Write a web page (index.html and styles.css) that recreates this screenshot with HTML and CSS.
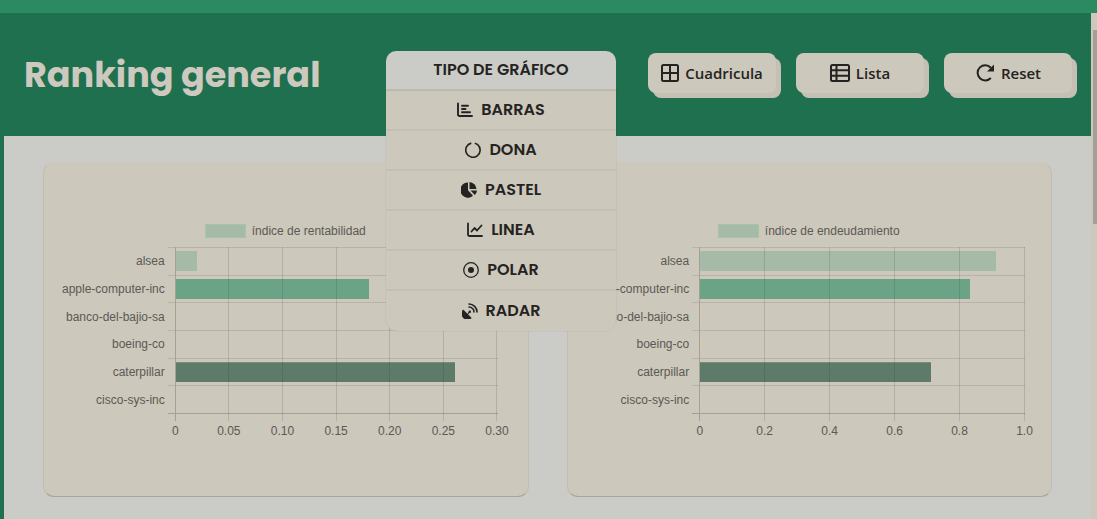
FILE: index.html
```html
<!DOCTYPE html>
<html lang="es">
<head>
<meta charset="utf-8">
<title>Ranking general</title>
<link rel="stylesheet" href="styles.css">
</head>
<body>
<div class="topbar"></div>
<div class="viewport">
  <div class="page">
    <header class="header">
      <h1 class="title">Ranking general</h1>
      <nav class="dropdown">
        <button class="dropdown-toggle" type="button" aria-expanded="true">TIPO DE GRÁFICO</button>
        <div class="menu">
          <button class="menu-item" type="button"><svg class="icon" viewBox="0 0 16 16"><path d="M1 1.500v11a1.500 1.500 0 0 0 1.500 1.500H15M5 3.800h6M5 7h3.500M5 10.200h8" stroke-width="1.900"/></svg>BARRAS</button>
          <button class="menu-item" type="button"><svg class="icon" viewBox="0 0 16 16"><path d="M9.800 1.200a7.200 7.200 0 0 1 2.900 1.500M12.700 2.700A7.200 7.200 0 1 1 6.300 1.100" stroke-width="1.600" stroke-linecap="butt"/></svg>DONA</button>
          <button class="menu-item" type="button"><svg class="icon solid" viewBox="0 0 16 16"><path d="M7 .5v7.800l5 5.400A7.600 7.600 0 1 1 7 .5z"/><path d="M8.500 0A7.500 7.500 0 0 1 15.500 7h-7z"/><path d="M9.500 8.500H16a7.500 7.500 0 0 1-2.200 4.600z"/></svg>PASTEL</button>
          <button class="menu-item" type="button"><svg class="icon" viewBox="0 0 16 16"><path d="M1 1.500v11a1.500 1.500 0 0 0 1.500 1.500H15M4.500 9.500l3-3.500 2.500 2.500 4.500-5" stroke-width="1.800"/></svg>LINEA</button>
          <button class="menu-item" type="button"><svg class="icon" viewBox="0 0 16 16"><circle cx="8" cy="8" r="7.300" stroke-width="1.300"/><circle class="dot" cx="8" cy="8" r="3"/></svg>POLAR</button>
          <button class="menu-item" type="button"><svg class="icon" viewBox="0 0 16 16"><path class="dot" d="M1.200 6.500l4.200 4.200 1.200-1.700a1.200 1.200 0 1 1 1 1L6 11.300l3.700 3.700A6 6 0 0 1 1.200 6.500z"/><path d="M7 1a8 8 0 0 1 8 8M7 4a5 5 0 0 1 5 5" stroke-width="1.600"/></svg>RADAR</button>
        </div>
      </nav>
      <div class="actions">
        <button class="action" type="button"><svg class="glyph" viewBox="0 0 18 18"><rect x="1" y="1" width="16" height="16" rx="1.500"/><path d="M9 1v16M1 9h16"/></svg>Cuadricula</button>
        <button class="action" type="button"><svg class="glyph wide" viewBox="0 0 20 18"><rect x="1" y="1" width="18" height="16" rx="1.500"/><path d="M6.500 1v16M1 6.300h18M1 11.700h18"/></svg>Lista</button>
        <button class="action" type="button"><svg class="glyph wide" viewBox="0 0 20 18"><path d="M15.800 14a7.600 7.600 0 1 1 0-10.300"/><path class="dot" d="M19 .5v7h-7z"/></svg>Reset</button>
      </div>
    </header>
    <main class="cards">
      <section class="card">
        <div class="legend"><span class="swatch"></span>índice de rentabilidad</div>
        <div class="chart">
          <div class="names"><span>alsea</span><span>apple-computer-inc</span><span>banco-del-bajio-sa</span><span>boeing-co</span><span>caterpillar</span><span>cisco-sys-inc</span></div>
          <div class="plot">
            <div class="rows">
              <div class="row"><i class="bar light" style="width:6.667%"></i></div>
              <div class="row"><i class="bar mid" style="width:60%"></i></div>
              <div class="row"></div><div class="row"></div>
              <div class="row"><i class="bar dark" style="width:86.667%"></i></div>
              <div class="row"></div>
            </div>
            <div class="lines"><i></i><i></i><i></i><i></i><i></i><i></i></div>
          </div>
          <div class="ticks"><span>0</span><span>0.05</span><span>0.10</span><span>0.15</span><span>0.20</span><span>0.25</span><span>0.30</span></div>
        </div>
      </section>
      <section class="card">
        <div class="legend"><span class="swatch"></span>índice de endeudamiento</div>
        <div class="chart short-ticks">
          <div class="names"><span>alsea</span><span>apple-computer-inc</span><span>banco-del-bajio-sa</span><span>boeing-co</span><span>caterpillar</span><span>cisco-sys-inc</span></div>
          <div class="plot">
            <div class="rows">
              <div class="row"><i class="bar light" style="width:91%"></i></div>
              <div class="row"><i class="bar mid" style="width:83%"></i></div>
              <div class="row"></div><div class="row"></div>
              <div class="row"><i class="bar dark" style="width:71%"></i></div>
              <div class="row"></div>
            </div>
            <div class="lines"><i></i><i></i><i></i><i></i><i></i></div>
          </div>
          <div class="ticks"><span>0</span><span>0.2</span><span>0.4</span><span>0.6</span><span>0.8</span><span>1.0</span></div>
        </div>
      </section>
    </main>
  </div>
  <div class="scrollbar"><div class="thumb"></div></div>
</div>
</body>
</html>
```
FILE: styles.css
```css
* { box-sizing: border-box; }
body {
  margin: 0;
  height: 100vh;
  display: flex;
  flex-direction: column;
  overflow: hidden;
  background: #cbccc7;
  font-family: "Liberation Sans", Arial, sans-serif;
}
.topbar { height: 13px; flex: none; background: #2b8a62; }
.viewport { flex: 1; display: flex; min-height: 0; }
.page { flex: 1; min-width: 0; border-left: 4px solid #1f704e; }
.header {
  display: grid;
  grid-template-columns: 1fr 230px auto;
  align-items: start;
  column-gap: 32px;
  padding: 38px 19px 0 20px;
  height: 123px;
  background: #1f704e;
}
.title {
  margin: 0;
  color: #cdc9bf;
  font: 700 35px/48px Poppins, Inter, sans-serif;
  white-space: nowrap;
}
button { border: 0; padding: 0; color: #242321; cursor: pointer; }
.dropdown { position: relative; }
.dropdown-toggle, .menu-item {
  display: flex;
  align-items: center;
  justify-content: center;
  gap: 8px;
  width: 100%;
  height: 40px;
  border-bottom: 2px solid #c5bfb4;
  font: 600 16px/24px Poppins, Inter, sans-serif;
}
.dropdown-toggle { background: #cbccc7; border-radius: 10px 10px 0 0; border-bottom-color: #c1bcb1; }
.menu {
  position: absolute;
  z-index: 2;
  top: 100%;
  left: 0;
  right: 0;
  border-radius: 0 0 12px 12px;
  background: #ccc8bc;
  box-shadow: 0 0 1px 1px rgba(0, 0, 0, .03);
}
.menu-item { background: none; }
.menu-item:last-child { border-bottom: 0; }
.icon { width: 16px; height: 16px; flex: none; fill: none; stroke: #242321; stroke-linecap: round; stroke-linejoin: round; }
.solid, .dot { fill: #242321; stroke: none; }
.actions { display: flex; gap: 20px; margin-top: 2px; }
.action {
  display: flex;
  align-items: center;
  justify-content: center;
  gap: 6px;
  width: 128px;
  height: 40px;
  border-radius: 8px;
  background: #cdc8bc;
  box-shadow: 5px 5px 0 #c6bfb4;
  font: 600 15px/20px "Open Sans", "Noto Sans", sans-serif;
}
.glyph { width: 18px; height: 18px; fill: none; stroke: #242321; stroke-width: 2; }
.glyph.wide { width: 20px; }
.glyph .dot { fill: #242321; stroke: none; }
.cards {
  display: grid;
  grid-template-columns: 1fr 1fr;
  gap: 38px;
  padding: 26px 39px;
}
.card {
  height: 335px;
  padding: 60px 19px 0 18px;
  border: 1px solid #c3bdb0;
  border-top-color: #ccc8bc;
  border-bottom-color: #aaa598;
  border-radius: 11px;
  background: #ccc8bc;
  color: #5b5953;
  font-size: 12px;
  line-height: 16px;
}
.legend { display: flex; justify-content: center; align-items: center; gap: 6px; }
.swatch { width: 41px; height: 14px; background: #a5bba7; border: 1px solid #a9c2ac; }
.chart {
  display: grid;
  grid-template-columns: auto 1fr;
  grid-template-rows: 167px auto;
  column-gap: 10px;
  padding-right: 11px;
  margin-top: 8px;
}
.short-ticks { padding: 0 7px 0 1px; }
.names { display: flex; flex-direction: column; text-align: right; }
.names span { flex: 1; display: flex; align-items: center; justify-content: flex-end; }
.plot { display: grid; }
.rows, .lines { grid-area: 1 / 1; display: flex; }
.rows { flex-direction: column; margin-left: -7px; border-bottom: 1px solid #a5a094; }
.row { flex: 1; min-height: 0; display: flex; align-items: center; border-top: 1px solid #b8b3a8; padding-left: 8px; }
.bar { height: 20px; }
.light { background: #a5bba7; }
.mid { background: #6ba387; }
.dark { background: #5e7b69; border-top: 1px solid #748f7c; }
.lines { border-left: 1px solid #a5a094; margin-bottom: -7px; }
.lines i { flex: 1; border-right: 1px solid rgba(60, 55, 45, .17); }
.ticks { grid-column: 2; display: flex; justify-content: space-between; margin-top: 9px; }
.ticks span { width: 1px; display: flex; justify-content: center; }
.scrollbar { width: 6px; flex: none; padding: 17px 0 0 2px; background: #ccc8bc; }
.thumb { height: 194px; background: #a5a097; }
```
